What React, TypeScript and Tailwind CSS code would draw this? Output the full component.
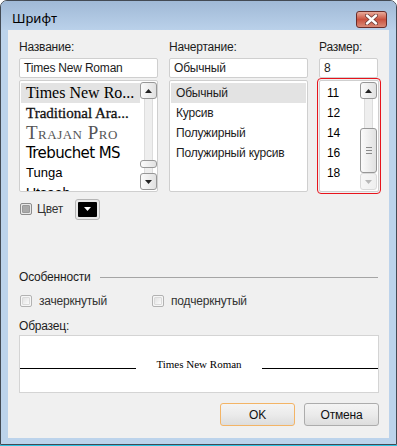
import React from "react";

const Tri = ({ dir, color = "#000" }: { dir: "up" | "down"; color?: string }) => (
  <svg width="7" height="4" viewBox="0 0 7 4">
    <path d={dir === "up" ? "M0 4L3.5 0L7 4Z" : "M0 0L7 0L3.5 4Z"} fill={color} />
  </svg>
);

const ScrollBtn = ({ dir, disabled }: { dir: "up" | "down"; disabled?: boolean }) => (
  <div
    className={`h-[17px] w-full rounded-[3px] border flex items-center justify-center bg-linear-to-r ${
      disabled
        ? "border-[#dadada] from-[#f7f7f7] to-[#efefef]"
        : "border-[#979797] from-[#fbfbfb] to-[#e1e1e1]"
    }`}
  >
    <Tri dir={dir} color={disabled ? "#b8b8b8" : "#222"} />
  </div>
);

const Scrollbar = ({ thumbTop, thumbH, grip, downDisabled }: { thumbTop: number; thumbH: number; grip?: boolean; downDisabled?: boolean }) => (
  <div className="w-[17px] flex flex-col py-px">
    <ScrollBtn dir="up" />
    <div className="flex-1 relative flex justify-center">
      <div className="w-[9px] h-full bg-[#eeeeee] border-x border-[#dddddd]" />
      <div
        className="absolute left-0 right-0 rounded-[3px] border border-[#979797] bg-linear-to-r from-[#fbfbfb] to-[#e1e1e1] flex flex-col items-center justify-center gap-[2px]"
        style={{ top: thumbTop, height: thumbH }}
      >
        {grip && (
          <>
            <div className="w-[6px] h-px bg-[#8a8a8a]" />
            <div className="w-[6px] h-px bg-[#8a8a8a]" />
            <div className="w-[6px] h-px bg-[#8a8a8a]" />
          </>
        )}
      </div>
    </div>
    <ScrollBtn dir="down" disabled={downDisabled} />
  </div>
);

const Check = ({ gray }: { gray?: boolean }) => (
  <div
    className={`w-[12px] h-[12px] rounded-[2px] border flex items-center justify-center ${
      gray ? "border-[#8c8c8c] bg-[#e8e8e8]" : "border-[#b2b2b2] bg-[#f6f6f6]"
    }`}
  >
    <div
      className={`w-[8px] h-[8px] rounded-[1px] ${
        gray ? "bg-[#a9a9a9] border border-[#9a9a9a]" : "bg-linear-to-br from-[#e2e2e2] to-[#fbfbfb] border border-[#dadada]"
      }`}
    />
  </div>
);

const Button = ({ children, active }: { children: React.ReactNode; active?: boolean }) => (
  <div
    className={`w-[75px] h-[23px] rounded-[3px] border flex items-center justify-center text-[12px] text-[#111] bg-linear-to-b from-[#f4f4f4] via-[#ebebeb] to-[#dddddd] ${
      active ? "border-[#f3b466]" : "border-[#acacac]"
    }`}
  >
    {children}
  </div>
);

const fonts = [
  { name: "Times New Ro...", cls: "font-['Liberation_Serif',serif] text-[16px]" },
  { name: "Traditional Ara...", cls: "font-['Liberation_Serif',serif] text-[15px] text-[#111] [-webkit-text-stroke:0.3px_#111]" },
  { name: "Trajan Pro", cls: "font-['Liberation_Serif',serif] text-[19px] [font-variant:small-caps] tracking-[0.5px] text-[#555]" },
  { name: "Trebuchet MS", cls: "font-['DejaVu_Sans',sans-serif] text-[15px] tracking-[-0.6px]" },
  { name: "Tunga", cls: "font-['Liberation_Sans',sans-serif] text-[13px]" },
  { name: "Utsaah", cls: "font-['Liberation_Sans',sans-serif] text-[14px]" },
];

const styles = ["Обычный", "Курсив", "Полужирный", "Полужирный курсив"];
const sizes = ["11", "12", "14", "16", "18"];

export default function App() {
  return (
    <div className="w-[397px] h-[446px] bg-white font-['Liberation_Sans',sans-serif] text-[12px] tracking-[-0.2px] text-[#1c1c1c] flex flex-col">
      <div className="h-[445px] rounded-t-[7px] border border-[#434a54] bg-[#bcd3eb] flex flex-col overflow-hidden">
        {/* title bar */}
        <div className="h-[29px] shrink-0 bg-linear-to-b from-[#a0b9d6] to-[#bad1ea] flex items-center justify-between pl-[11px] pr-[9px] pt-[7px]">
          <span className="text-[13px] text-black font-['Noto_Sans',sans-serif] tracking-normal">Шрифт</span>
          <div className="w-[31px] h-[17px] rounded-[3px] border border-[#6a2d2a] bg-linear-to-b from-[#e8ab9c] via-[#c9513f] to-[#d98a77] flex items-center justify-center">
            <svg width="13" height="11" viewBox="0 0 13 11">
              <path d="M2 1.5L11 9.5M11 1.5L2 9.5" stroke="#6e3b36" strokeWidth="4" strokeLinecap="round" />
              <path d="M2 1.5L11 9.5M11 1.5L2 9.5" stroke="#fff" strokeWidth="2.4" strokeLinecap="round" />
            </svg>
          </div>
        </div>

        {/* client */}
        <div className="mx-[7px] h-[408px] bg-[#f0f0f0] pl-[11px] pr-[10px] pt-[9px] flex flex-col">
          <div className="flex gap-[11px]">
            {/* name column */}
            <div className="w-[139px] flex flex-col">
              <div className="h-[16px] leading-[16px]">Название:</div>
              <div className="mt-[3px] h-[20px] border border-[#cfcfcf] rounded-[2px] bg-white pl-[4px] flex items-center">Times New Roman</div>
              <div className="mt-[2px] h-[112px] border border-[#cfcfcf] rounded-[2px] bg-white flex pl-px">
                <div className="flex-1 overflow-hidden pt-[2px] text-black tracking-normal">
                  {fonts.map((f, i) => (
                    <div key={f.name} className={`h-[20px] pl-[5px] flex items-center whitespace-nowrap ${i === 0 ? "bg-[#e3e3e3]" : ""}`}>
                      <span className={f.cls}>{f.name}</span>
                    </div>
                  ))}
                </div>
                <Scrollbar thumbTop={61} thumbH={8} />
              </div>
            </div>

            {/* style column */}
            <div className="w-[139px] flex flex-col">
              <div className="h-[16px] leading-[16px]">Начертание:</div>
              <div className="mt-[3px] h-[20px] border border-[#cfcfcf] rounded-[2px] bg-white pl-[4px] flex items-center">Обычный</div>
              <div className="mt-[2px] h-[112px] border border-[#cfcfcf] rounded-[2px] bg-white p-px pt-[2px]">
                {styles.map((s, i) => (
                  <div key={s} className={`h-[20px] pl-[5px] flex items-center ${i === 0 ? "bg-[#e3e3e3]" : ""}`}>
                    {s}
                  </div>
                ))}
              </div>
            </div>

            {/* size column */}
            <div className="w-[60px] flex flex-col">
              <div className="h-[16px] leading-[16px]">Размер:</div>
              <div className="mt-[3px] h-[20px] w-[59px] border border-[#cfcfcf] rounded-[2px] bg-white pl-[4px] flex items-center">8</div>
              <div className="mt-[2px] h-[112px] border border-[#cfcfcf] rounded-[2px] bg-white flex pr-px outline outline-[#e8141c] outline-offset-1">
                <div className="flex-1 pt-[2px] text-black">
                  {sizes.map((s) => (
                    <div key={s} className="h-[20px] pl-[7px] flex items-center">
                      {s}
                    </div>
                  ))}
                </div>
                <Scrollbar thumbTop={29} thumbH={45} grip downDisabled />
              </div>
            </div>
          </div>

          {/* colour */}
          <div className="mt-[7px] h-[20px] flex items-center pl-px">
            <Check gray />
            <span className="ml-[5px] text-[#333]">Цвет</span>
            <div className="ml-[12px] w-[25px] h-[21px] rounded-[3px] border border-[#b5b5b5] bg-[#e9e9e9] p-[2px]">
              <div className="w-full h-full bg-black rounded-[1px] flex items-center justify-center">
                <Tri dir="down" color="#fff" />
              </div>
            </div>
          </div>

          {/* effects */}
          <div className="mt-[50px] h-[16px] flex items-center">
            <span className="leading-[16px]">Особенности</span>
            <div className="ml-[10px] mr-px flex-1 h-px bg-[#a5a5a5]" />
          </div>
          <div className="mt-[9px] h-[14px] flex items-center pl-px">
            <div className="w-[132px] flex items-center">
              <Check />
              <span className="ml-[7px] text-[#333]">зачеркнутый</span>
            </div>
            <Check />
            <span className="ml-[7px] text-[#333]">подчеркнутый</span>
          </div>

          {/* sample */}
          <div className="mt-[10px] h-[16px] leading-[16px]">Образец:</div>
          <div className="mt-px h-[58px] border border-[#d4d4d4] bg-white flex items-center">
            <div className="flex-1 h-px bg-black translate-y-[4px]" />
            <span className="px-[20px] font-['Liberation_Serif',serif] text-[11px] tracking-normal text-black">Times New Roman</span>
            <div className="flex-1 h-px bg-black translate-y-[4px]" />
          </div>

          {/* buttons */}
          <div className="mt-[10px] flex justify-end gap-[9px]">
            <Button active>OK</Button>
            <Button>Отмена</Button>
          </div>
        </div>
      </div>
      <div className="h-px bg-[#2ec4e4]" />
    </div>
  );
}
